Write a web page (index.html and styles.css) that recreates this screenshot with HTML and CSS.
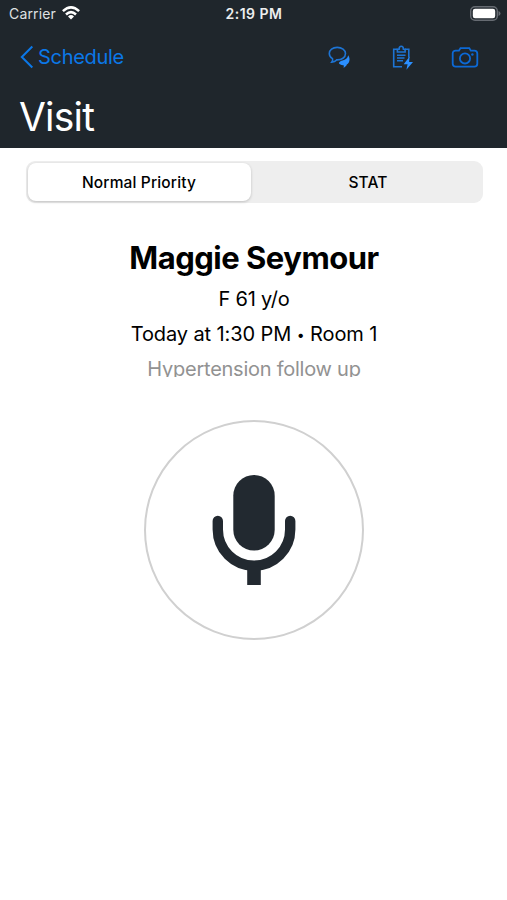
FILE: index.html
```html
<!DOCTYPE html>
<html lang="en">
<head>
<meta charset="utf-8">
<title>Visit</title>
<link rel="stylesheet" href="styles.css">
</head>
<body>
<header class="header">
  <div class="status">
    <div class="carrier"><span>Carrier</span>
      <svg class="wifi" width="18" height="14" viewBox="0 0 18 14"><g fill="none" stroke="#fff" stroke-width="2.5"><path d="M.9 5.2Q9-2.5 17.1 5.2"/><path d="M4 8.5Q9 3.7 14 8.5"/></g><path d="M6 10.4Q9 7.8 12 10.4L9 13.6Z" fill="#fff"/></svg>
    </div>
    <div class="time">2:19 PM</div>
    <svg class="battery" width="31" height="15" viewBox="0 0 31 15"><rect x=".7" y=".7" width="26.6" height="13.6" rx="4.3" fill="none" stroke="#666b72" stroke-width="1.4"/><rect x="2.8" y="2.8" width="22.4" height="9.4" rx="2.2" fill="#fff"/><path d="M28.5 5Q30.5 5.8 30.5 7.5T28.5 10Z" fill="#666b72"/></svg>
  </div>
  <nav class="nav">
    <a class="back"><svg width="14" height="24" viewBox="0 0 14 24"><path d="M12.3 1.5 1.8 12 12.3 22.5" fill="none" stroke="currentColor" stroke-width="2"/></svg><span>Schedule</span></a>
    <div class="actions">
      <svg width="24" height="26" viewBox="0 0 24 26"><path d="M10.2 3.4C5.6 3.4 2.3 6 2.3 9.5c0 2.3 1.3 4 3.2 5.1.5 1-.1 2.5-.8 3.5 2.2-.1 3.9-1 4.9-2.2 5.2.2 8.9-2.5 8.9-6.4 0-3.5-3.7-6.1-8.3-6.1Z" fill="none" stroke="#1d74d4" stroke-width="1.6"/><path d="M21.2 11.2c2.1 3 1.9 7.2-1.4 9.3-.3 1.2-1.5 2.4-3.2 3.4.3-1.3.2-2 0-2.7-2.2.2-4-.7-4.8-2.2.6-1.2 1.9-2.3 3.7-2.6 3-.5 5.2-2.4 5.7-5.2Z" fill="#2b8fff"/></svg>
      <svg width="24" height="26" viewBox="0 0 24 26"><g fill="none" stroke="#1d74d4" stroke-width="1.6"><path d="M12 22.7H3.7V5.3H7.5M15 5.3h3.8v8.4"/><path d="M7.4 8V5.2h1.7C9.1 1.3 13.4 1.3 13.4 5.2h1.7V8Z"/><path d="M7 11.3h8.5M7 14h7.5M7 16.7h6"/></g><path d="m19.6 12.6-5.9 7.6h3.9l-1.2 5.6 6.6-7.7h-3.9Z" fill="#2b8fff"/></svg>
      <svg width="28" height="26" viewBox="0 0 28 26"><g fill="none" stroke="#0c69d6" stroke-width="1.8"><path d="M4.7 6.6H8l1.5-2.5h8.8l1.5 2.5h3.5c1.9 0 3 1.1 3 2.9v10.2c0 1.8-1.1 2.9-3 2.9H4.7c-1.9 0-3-1.1-3-2.9V9.5c0-1.8 1.1-2.9 3-2.9Z"/><circle cx="14" cy="14.4" r="5.1"/></g><circle cx="21.4" cy="10.5" r="1.2" fill="#0c69d6"/></svg>
    </div>
  </nav>
  <h1 class="title"><span>Visit</span></h1>
</header>
<main class="content">
  <div class="segments">
    <div class="segment selected"><span>Normal Priority</span></div>
    <div class="segment stat"><span>STAT</span></div>
  </div>
  <section class="patient">
    <h2 class="name"><span>Maggie Seymour</span></h2>
    <p class="age"><span>F 61 y/o</span></p>
    <p class="when"><span>Today at 1:30 PM <span class="dot">•</span> Room 1</span></p>
    <p class="reason"><span>Hypertension follow up</span></p>
  </section>
  <button class="record" aria-label="Record">
    <svg width="84" height="112" viewBox="0 0 84 112"><rect x="21.3" y="1" width="41.4" height="75.5" rx="20.7" fill="#222930"/><path d="M5.8 47V55.5a36.2 36.2 0 0 0 72.4 0V47" fill="none" stroke="#222930" stroke-width="10.4" stroke-linecap="round"/><path d="M35.2 92.5h13.6V111H35.2Z" fill="#222930"/></svg>
  </button>
</main>
</body>
</html>
```
FILE: styles.css
```css
* { box-sizing: border-box; }
body { margin: 0; min-height: 900px; background: #fff; color: #000; font-family: Inter, "Liberation Sans", sans-serif; }
h1, h2, p { margin: 0; font-weight: 400; white-space: nowrap; }
svg { display: block; flex: none; }
.header { height: 148px; background: #1f262c; color: #fff; }
.status { height: 27px; display: grid; grid-template-columns: 1fr auto 1fr; align-items: center; padding: 0 6px 0 9px; }
.carrier { display: flex; align-items: center; gap: 6px; font-size: 14px; letter-spacing: .15px; color: #dfe1e3; }
.wifi { margin-top: -2px; }
.time { margin-left: -2px; font-size: 14px; font-weight: 600; letter-spacing: .5px; color: #eceeef; }
.battery { justify-self: end; margin-top: -1px; }
.nav { height: 60px; display: flex; align-items: center; justify-content: space-between; padding: 0 28px 0 20px; color: #0b78e8; }
.back { display: flex; align-items: center; gap: 4px; font-size: 20px; letter-spacing: -.3px; }
.actions { display: flex; align-items: center; gap: 40px; }
.actions svg:nth-child(2) { margin-right: -3px; }
.actions svg:first-child { margin-right: -1px; }
.title { height: 60px; padding-left: 19px; font-size: 39px; line-height: 60px; letter-spacing: -.8px; }
.content { display: flex; flex-direction: column; align-items: center; padding-top: 13px; }
.segments { width: 457px; height: 42px; display: flex; margin-left: 1px; padding: 2px; background: #eee; border-radius: 9px; }
.segment { flex: 1; display: flex; align-items: center; justify-content: center; font-size: 15.5px; font-weight: 500; letter-spacing: .15px; }
.selected { background: #fff; border-radius: 8px; box-shadow: 0 1px 3px rgba(0, 0, 0, .2); flex: 0 0 223px; }
.stat { padding-left: 5px; }
.patient { width: 301px; height: 174px; overflow: hidden; margin-left: 1px; padding-top: 35px; text-align: center; }
.name { height: 44px; font-size: 31px; font-weight: 700; line-height: 40px; letter-spacing: -.5px; }
.age, .when, .reason { height: 35px; font-size: 20px; line-height: 35px; letter-spacing: -.25px; }
.when { letter-spacing: -.1px; }
.dot { font-size: 14px; vertical-align: 1px; }
.reason { color: #929292; }
.record { width: 220px; height: 220px; margin-top: 43px; display: flex; align-items: center; justify-content: center; padding: 0; background: none; border: 2px solid #d0d0d0; border-radius: 50%; }
```
